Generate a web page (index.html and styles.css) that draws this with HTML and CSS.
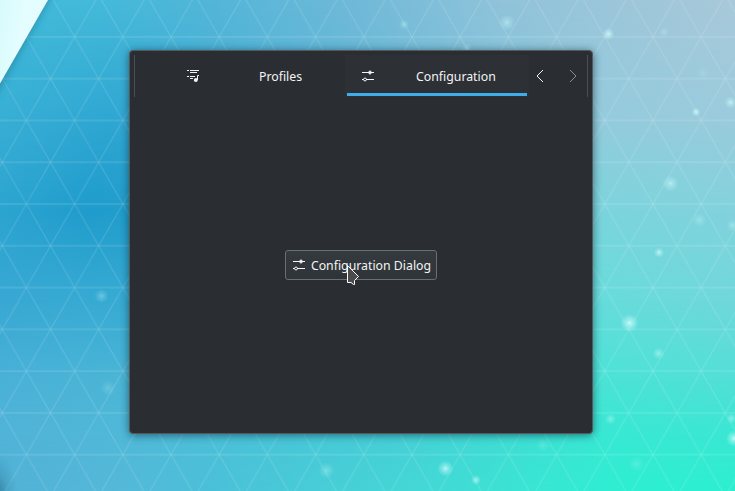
FILE: index.html
```html
<!DOCTYPE html>
<html lang="en">
<head>
<meta charset="utf-8">
<title>Configuration</title>
<link rel="stylesheet" href="styles.css">
</head>
<body>
<svg class="wallpaper" width="735" height="491" viewBox="0 0 735 491" aria-hidden="true">
  <defs>
    <linearGradient id="r0"><stop offset="0" stop-color="#40bbd9"/><stop offset=".14" stop-color="#45bad9"/><stop offset=".28" stop-color="#52b6d9"/><stop offset=".48" stop-color="#70b9d8"/><stop offset=".68" stop-color="#90c3da"/><stop offset="1" stop-color="#a9c9da"/></linearGradient>
    <linearGradient id="r1"><stop offset="0" stop-color="#38aed4"/><stop offset=".15" stop-color="#2ea6d2"/><stop offset=".8" stop-color="#93cbdc"/><stop offset="1" stop-color="#9acbdc"/></linearGradient>
    <linearGradient id="r2"><stop offset="0" stop-color="#2ca4d0"/><stop offset=".12" stop-color="#1f9ccc"/><stop offset=".18" stop-color="#229dcc"/><stop offset=".8" stop-color="#7bd4dc"/><stop offset="1" stop-color="#82d2dc"/></linearGradient>
    <linearGradient id="r3"><stop offset="0" stop-color="#38a8d3"/><stop offset=".17" stop-color="#37abd3"/><stop offset=".8" stop-color="#66dcdb"/><stop offset="1" stop-color="#70d7db"/></linearGradient>
    <linearGradient id="r4"><stop offset="0" stop-color="#4ab1d7"/><stop offset=".17" stop-color="#4bb5d6"/><stop offset=".8" stop-color="#4ae3d6"/><stop offset="1" stop-color="#52dfd7"/></linearGradient>
    <linearGradient id="r5"><stop offset="0" stop-color="#51b3d8"/><stop offset=".18" stop-color="#50b9d8"/><stop offset=".35" stop-color="#49c3d8"/><stop offset=".55" stop-color="#46d0d6"/><stop offset=".68" stop-color="#40dcd5"/><stop offset=".82" stop-color="#38e8d3"/><stop offset="1" stop-color="#3ae7d3"/></linearGradient>
    <linearGradient id="r6"><stop offset="0" stop-color="#52b1d6"/><stop offset=".16" stop-color="#55b8d9"/><stop offset=".28" stop-color="#4bbfd8"/><stop offset=".42" stop-color="#48ccd7"/><stop offset=".58" stop-color="#43d8d5"/><stop offset=".7" stop-color="#3be3d3"/><stop offset=".84" stop-color="#2eeed1"/><stop offset="1" stop-color="#2cefcf"/></linearGradient>
    <linearGradient id="fade" x2="0" y2="1"><stop offset="0" stop-color="#fff" stop-opacity="0"/><stop offset="1" stop-color="#fff"/></linearGradient>
    <mask id="m1" maskUnits="userSpaceOnUse" x="0" y="0" width="735" height="491"><rect width="735" height="120" fill="url(#fade)"/><rect y="120" width="735" height="371" fill="#fff"/></mask>
    <mask id="m2" maskUnits="userSpaceOnUse" x="0" y="0" width="735" height="491"><rect y="120" width="735" height="90" fill="url(#fade)"/><rect y="210" width="735" height="281" fill="#fff"/></mask>
    <mask id="m3" maskUnits="userSpaceOnUse" x="0" y="0" width="735" height="491"><rect y="210" width="735" height="90" fill="url(#fade)"/><rect y="300" width="735" height="191" fill="#fff"/></mask>
    <mask id="m4" maskUnits="userSpaceOnUse" x="0" y="0" width="735" height="491"><rect y="300" width="735" height="80" fill="url(#fade)"/><rect y="380" width="735" height="111" fill="#fff"/></mask>
    <mask id="m5" maskUnits="userSpaceOnUse" x="0" y="0" width="735" height="491"><rect y="380" width="735" height="55" fill="url(#fade)"/><rect y="435" width="735" height="56" fill="#fff"/></mask>
    <mask id="m6" maskUnits="userSpaceOnUse" x="0" y="0" width="735" height="491"><rect y="435" width="735" height="56" fill="url(#fade)"/></mask>
    <pattern id="tri" patternUnits="userSpaceOnUse" x="26.4" y="36.9" width="48.2" height="83.56">
      <path d="M0 0L48.2 83.56M48.2 0L0 83.56" stroke="#fff" stroke-opacity=".15" fill="none"/>
      <path d="M0 0H48.2M0 41.78H48.2M0 83.56H48.2" stroke="#fff" stroke-opacity=".13" stroke-width="1.5" fill="none"/>
    </pattern>
    <radialGradient id="glow"><stop offset="0" stop-color="#d8ffff"/><stop offset=".3" stop-color="#c8fbfb" stop-opacity=".65"/><stop offset="1" stop-color="#c8fbfb" stop-opacity="0"/></radialGradient>
    <radialGradient id="corner"><stop offset="0" stop-color="#1b6580" stop-opacity=".6"/><stop offset=".5" stop-color="#1b6580" stop-opacity=".2"/><stop offset="1" stop-color="#1b6580" stop-opacity="0"/></radialGradient>
    <linearGradient id="paper" x1="0" y1="0" x2="1" y2=".3"><stop offset="0" stop-color="#d7fbfb"/><stop offset=".5" stop-color="#e4fdfe"/><stop offset="1" stop-color="#e2fcfd"/></linearGradient>
    <filter id="soft" x="-50%" y="-50%" width="200%" height="200%"><feGaussianBlur stdDeviation="5"/></filter>
  </defs>
  <rect width="735" height="491" fill="url(#r0)"/>
  <rect width="735" height="491" fill="url(#r1)" mask="url(#m1)"/>
  <rect width="735" height="491" fill="url(#r2)" mask="url(#m2)"/>
  <rect width="735" height="491" fill="url(#r3)" mask="url(#m3)"/>
  <rect width="735" height="491" fill="url(#r4)" mask="url(#m4)"/>
  <rect width="735" height="491" fill="url(#r5)" mask="url(#m5)"/>
  <rect width="735" height="491" fill="url(#r6)" mask="url(#m6)"/>
  <rect width="735" height="491" fill="url(#tri)"/>
  <ellipse cx="-3" cy="493" rx="20" ry="40" fill="url(#corner)"/>
  <g fill="url(#glow)">
    <circle cx="404" cy="24.500" r="5" opacity=".4"/><circle cx="507" cy="22.500" r="8" opacity=".5"/>
    <circle cx="608.500" cy="34" r="6" opacity=".85"/><circle cx="664" cy="32" r="5" opacity=".3"/>
    <circle cx="467" cy="48" r="5" opacity=".4"/><circle cx="703" cy="73" r="7" opacity=".15"/>
    <circle cx="696" cy="112" r="4.500" opacity=".9"/><circle cx="730.500" cy="102.500" r="6" opacity=".7"/>
    <circle cx="670.500" cy="183.500" r="8" opacity=".6"/><circle cx="699.500" cy="220" r="7" opacity=".35"/>
    <circle cx="732.500" cy="225.500" r="6" opacity=".4"/><circle cx="659" cy="252.500" r="5" opacity=".8"/>
    <circle cx="629.500" cy="323" r="9" opacity=".9"/><circle cx="658.500" cy="353.500" r="6" opacity=".5"/>
    <circle cx="610.500" cy="419" r="5.500" opacity=".45"/><circle cx="731.500" cy="418.500" r="5" opacity=".5"/>
    <circle cx="734" cy="438.500" r="8" opacity=".85"/><circle cx="636.500" cy="464" r="8" opacity=".2"/>
    <circle cx="543" cy="445" r="7" opacity=".2"/><circle cx="445.500" cy="468.500" r="8" opacity=".8"/>
    <circle cx="476" cy="480" r="5" opacity=".7"/><circle cx="326.500" cy="470.500" r="8" opacity=".35"/>
    <circle cx="101.500" cy="296" r="7" opacity=".35"/><circle cx="108" cy="388" r="8" opacity=".22"/>
  </g>
  <path d="M-20 -20H58L-2 88L-20 110Z" fill="#155a78" opacity=".6" filter="url(#soft)"/>
  <path d="M0 0H48L0 83.500Z" fill="url(#paper)"/>
</svg>

<svg class="symbols" aria-hidden="true">
  <symbol id="sliders" viewBox="0 0 16 16">
    <path d="M2 4.500H14M6 11.500H14" stroke="currentColor" fill="none"/>
    <path d="M10 2.500L12 4.500L10 6.500L8 4.500Z" fill="currentColor" stroke="currentColor" stroke-width=".5"/>
    <circle cx="5" cy="11.500" r="1.450" fill="none" stroke="currentColor"/>
    <path d="M2 11.500H3.500" stroke="currentColor"/>
  </symbol>
</svg>

<main class="window">
  <header class="tabbar">
    <div class="tab">
      <svg class="icon" viewBox="0 0 16 16" fill="none" stroke="currentColor">
        <path d="M2 2.500H4M5 2.500H14M5 4.500H12M2 8.500H4M5 8.500H10M5 10.500H8"/>
        <path d="M12.500 12V7.500H14"/>
        <circle cx="10.800" cy="12" r="2" fill="currentColor" stroke="none"/>
      </svg>
      <span class="label">Profiles</span>
    </div>
    <div class="tab active">
      <svg class="icon"><use href="#sliders"/></svg>
      <span class="label">Configuration</span>
    </div>
    <svg class="arrow" viewBox="0 0 16 16"><path d="M11 2L5 8L11 14"/></svg>
    <svg class="arrow next" viewBox="0 0 16 16"><path d="M5 2L11 8L5 14"/></svg>
  </header>
  <section class="content">
    <button class="dialog-button">
      <svg class="icon"><use href="#sliders"/></svg>
      <span class="caption">Configuration Dialog</span>
      <svg class="cursor" viewBox="0 0 14 22"><path d="M1.500 1.500V18.500H5L7.500 20.500H8.500V16.500L12.500 12.500Z"/></svg>
    </button>
  </section>
</main>
</body>
</html>
```
FILE: styles.css
```css
* { box-sizing: border-box; }

body {
  margin: 0;
  width: 735px;
  height: 491px;
  overflow: hidden;
  display: grid;
  font: 12.3px/18px "Noto Sans", sans-serif;
  color: #f3f4f4;
}

.wallpaper,
.window { grid-area: 1 / 1; }

.wallpaper { display: block; }

.symbols {
  position: absolute;
  width: 0;
  height: 0;
}

.window {
  z-index: 1;
  width: 464px;
  height: 384px;
  margin: 50px 0 0 129px;
  padding: 4px;
  display: flex;
  flex-direction: column;
  background: #2a2e32;
  border: 1px solid #56595c;
  border-radius: 4px;
  box-shadow: 0 1px 9px rgba(10, 45, 60, .65);
}

.tabbar {
  display: flex;
  align-items: center;
  height: 42px;
  border: solid #4b4f53;
  border-width: 0 1px;
}

.tab {
  display: flex;
  align-items: center;
  height: 100%;
  width: 210px;
  padding-left: 50px;
}

.tab .label {
  flex: 1;
  text-align: center;
  padding: 2px 0 0 15px;
}

.tab.active {
  width: 184px;
  padding-left: 13px;
  border: solid transparent;
  border-width: 0 2px;
  background: linear-gradient(#3daee9, #3daee9) bottom 1px left 0 / 100% 3px no-repeat padding-box, #2d3035 border-box;
}

.tab.active .label {
  text-align: left;
  padding-left: 40px;
}

.icon {
  width: 16px;
  height: 16px;
  flex: none;
}

.arrow {
  width: 16px;
  height: 16px;
  margin-left: 3px;
  fill: none;
  stroke: currentColor;
}

.arrow.next {
  margin-left: 17px;
  color: #8b8e90;
}

.content {
  flex: 1;
  display: flex;
  justify-content: center;
}

.dialog-button {
  position: relative;
  display: flex;
  align-items: center;
  justify-content: center;
  gap: 4px;
  width: 152px;
  height: 30px;
  margin-top: 153px;
  padding: 0;
  font: inherit;
  color: inherit;
  white-space: nowrap;
  background: linear-gradient(#343a3e, #2f3438);
  border: 1px solid #6b6f73;
  border-radius: 3px;
}

.caption { padding-top: 2px; }

.cursor {
  position: absolute;
  left: 60px;
  top: 13px;
  width: 14px;
  height: 22px;
  fill: #4b4b4b;
  stroke: #fff;
}
```
